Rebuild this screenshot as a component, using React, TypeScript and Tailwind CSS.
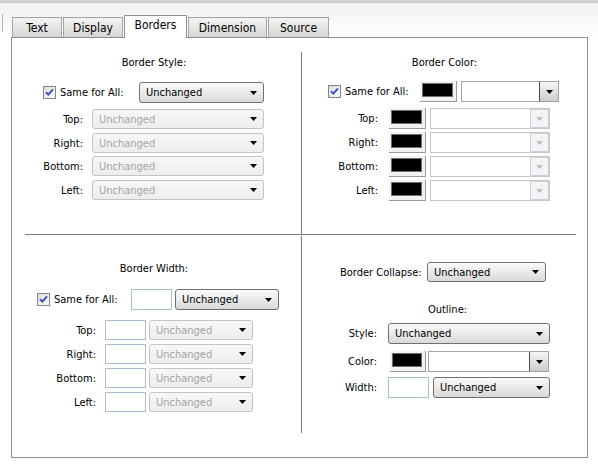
import type { ReactNode } from "react";

const Arrow = ({ color = "#000" }: { color?: string }) => (
  <svg width="7" height="4" viewBox="0 0 7 4" className="shrink-0">
    <path d="M0 0H7L3.5 4Z" fill={color} />
  </svg>
);

function Checkbox() {
  return (
    <svg width="13" height="13" viewBox="0 0 13 13" className="shrink-0">
      <defs>
        <linearGradient id="cbg" x1="0" y1="0" x2="1" y2="1">
          <stop offset="0" stopColor="#dcdcd6" />
          <stop offset="1" stopColor="#ffffff" />
        </linearGradient>
      </defs>
      <rect x="0.5" y="0.5" width="12" height="12" fill="url(#cbg)" stroke="#7a8799" />
      <path d="M3 6.2 L5.3 8.6 L10 3.4" fill="none" stroke="#3a4cc4" strokeWidth="1.9" />
    </svg>
  );
}

function Select({ w, h = 20, disabled = false }: { w: string; h?: number; disabled?: boolean }) {
  return (
    <div
      className={`${w} ${h === 21 ? "h-[21px]" : "h-[20px]"} flex items-center justify-between rounded-[3px] border pl-[6px] pr-[6px] ${
        disabled
          ? "border-[#c3c3c3] bg-gradient-to-b from-[#f7f7f7] to-[#ededed] text-[#a4a4a4]"
          : "border-[#707070] bg-gradient-to-b from-[#fbfbfb] to-[#d9d9d9] text-black"
      }`}
    >
      <span>Unchanged</span>
      <Arrow />
    </div>
  );
}

function Combo({ w, disabled = false }: { w: string; disabled?: boolean }) {
  return disabled ? (
    <div className={`${w} h-[21px] flex justify-end border border-[#c6c6c6] bg-white`}>
      <div className="w-[19px] h-full flex items-center justify-center border border-[#c4d1e2] bg-[#f3f3f3]">
        <Arrow color="#bdbdbd" />
      </div>
    </div>
  ) : (
    <div className={`${w} h-[21px] flex justify-end border border-[#a3a3a3] bg-white`}>
      <div className="w-[19px] h-full flex items-center justify-center border-l border-[#4a4a4a] bg-gradient-to-b from-[#f6f6f6] to-[#cdcdcd]">
        <Arrow />
      </div>
    </div>
  );
}

function ColorButton({ w = "w-[37px]" }: { w?: string }) {
  return (
    <div className={`${w} h-[21px] flex items-start border-r border-b border-[#9a9a9a] bg-[#f2f2f2] pl-[2px] pt-[2px] pr-[3px]`}>
      <div className="flex-1 h-[14px] bg-black border border-[#6e6e6e]" />
    </div>
  );
}

function Input({ h = 20 }: { h?: number }) {
  return <div className={`w-[41px] ${h === 21 ? "h-[21px]" : "h-[20px]"} border border-[#a9bdd6] bg-white`} />;
}

function Label({ w, children }: { w: string; children: ReactNode }) {
  return <div className={`${w} text-right shrink-0`}>{children}</div>;
}

const TABS = [
  { name: "Text", w: "w-[50px] mr-px" },
  { name: "Display", w: "w-[60px] mr-px" },
  { name: "Borders", w: "w-[63px] mr-px", active: true },
  { name: "Dimension", w: "w-[79px] mr-px" },
  { name: "Source", w: "w-[61px]" },
];

function Tabs() {
  return (
    <div className="flex items-end h-[22px] ml-[12px]">
      {TABS.map((t) =>
        t.active ? (
          <div
            key={t.name}
            className={`${t.w} relative z-10 -mb-px h-[23px] border border-b-0 border-[#919191] bg-white text-center pt-[3px] text-[12px]`}
          >
            {t.name}
          </div>
        ) : (
          <div
            key={t.name}
            className={`${t.w} h-[20px] border border-b-0 border-[#a5a5a5] bg-gradient-to-b from-[#f4f4f4] to-[#d6d6d6] text-center pt-[4px] text-[12px]`}
          >
            {t.name}
          </div>
        )
      )}
    </div>
  );
}

function BorderStyle() {
  const rows = ["Top:", "Right:", "Bottom:", "Left:"];
  const mts = ["mt-[6px]", "mt-[4px]", "mt-[3px]", "mt-[4px]"];
  return (
    <div className="w-[289px] shrink-0">
      <div className="mt-[18px] pr-[5px] text-center">Border Style:</div>
      <div className="mt-[13px] flex items-center h-[21px] pl-[31px]">
        <Checkbox />
        <div className="ml-[4px] w-[79px]">Same for All:</div>
        <Select w="w-[125px]" h={21} />
      </div>
      {rows.map((r, i) => (
        <div key={r} className={`${mts[i]} flex items-center h-[20px]`}>
          <Label w="w-[71px]">{r}</Label>
          <div className="ml-[9px]">
            <Select w="w-[172px]" disabled />
          </div>
        </div>
      ))}
    </div>
  );
}

function BorderColor() {
  const rows = ["Top:", "Right:", "Bottom:", "Left:"];
  return (
    <div className="flex-1">
      <div className="mt-[18px] text-center">Border Color:</div>
      <div className="mt-[12px] flex items-center h-[21px] pl-[26px]">
        <Checkbox />
        <div className="ml-[4px] w-[75px]">Same for All:</div>
        <ColorButton />
        <div className="ml-[4px]">
          <Combo w="w-[98px]" />
        </div>
      </div>
      <div className="mt-[6px] flex flex-col gap-[3px]">
        {rows.map((r) => (
          <div key={r} className="flex items-center h-[21px]">
            <Label w="w-[76px]">{r}</Label>
            <div className="ml-[11px] flex items-center">
              <ColorButton />
              <div className="ml-[4px]">
                <Combo w="w-[120px]" disabled />
              </div>
            </div>
          </div>
        ))}
      </div>
    </div>
  );
}

function BorderWidth() {
  const rows = ["Top:", "Right:", "Bottom:", "Left:"];
  return (
    <div className="w-[289px] shrink-0">
      <div className="mt-[27px] pr-[5px] text-center">Border Width:</div>
      <div className="mt-[14px] flex items-center h-[21px] pl-[25px]">
        <Checkbox />
        <div className="ml-[4px] w-[77px]">Same for All:</div>
        <Input h={21} />
        <div className="ml-[3px]">
          <Select w="w-[104px]" h={21} />
        </div>
      </div>
      <div className="mt-[10px] flex flex-col gap-[4px]">
        {rows.map((r) => (
          <div key={r} className="flex items-center h-[20px]">
            <Label w="w-[84px]">{r}</Label>
            <div className="ml-[9px] flex items-center">
              <Input />
              <div className="ml-[3px]">
                <Select w="w-[104px]" disabled />
              </div>
            </div>
          </div>
        ))}
      </div>
    </div>
  );
}

function Collapse() {
  return (
    <div className="flex-1">
      <div className="mt-[27px] flex items-center h-[20px] pl-[38px]">
        <div className="w-[87px]">Border Collapse:</div>
        <Select w="w-[119px]" />
      </div>
      <div className="mt-[21px] pl-[6px] text-center">Outline:</div>
      <div className="mt-[7px] flex items-center h-[21px]">
        <Label w="w-[75px]">Style:</Label>
        <div className="ml-[11px]">
          <Select w="w-[162px]" h={21} />
        </div>
      </div>
      <div className="mt-[7px] flex items-center h-[21px]">
        <Label w="w-[75px]">Color:</Label>
        <div className="ml-[13px] flex items-center">
          <ColorButton w="w-[36px]" />
          <div className="ml-[2px]">
            <Combo w="w-[121px]" />
          </div>
        </div>
      </div>
      <div className="mt-[5px] flex items-center h-[21px]">
        <Label w="w-[75px]">Width:</Label>
        <div className="ml-[11px] flex items-center">
          <Input h={21} />
          <div className="ml-[4px]">
            <Select w="w-[117px]" h={21} />
          </div>
        </div>
      </div>
    </div>
  );
}

export default function App() {
  return (
    <div className="relative w-[598px] h-[465px] overflow-hidden bg-white text-black text-[11px] leading-[13px] font-['DejaVu_Sans_Condensed','DejaVu_Sans',sans-serif] font-stretch-condensed">
      <div className="h-[2px] bg-[#d4d4d4]" />
      <div className="h-px bg-[#c8c8c8]" />
      <div className="bg-gradient-to-b from-[#f1f1f1] to-white pt-[12px]">
        <Tabs />
      </div>
      {/* edge of the neighbouring pane */}
      <div className="absolute left-[2px] top-[14px] w-px h-[18px] bg-[#b0b0b0]" />
      <div className="ml-[11px] w-[577px] h-[421px] border border-[#8f8f8f] bg-white">
        <div className="flex h-[196px]">
          <BorderStyle />
          <div className="w-px mt-[14px] bg-[#7d7d7d]" />
          <BorderColor />
        </div>
        <div className="ml-[13px] w-[551px] h-px bg-[#7d7d7d]" />
        <div className="flex h-[222px]">
          <BorderWidth />
          <div className="w-px mt-px h-[197px] bg-[#7d7d7d]" />
          <Collapse />
        </div>
      </div>
    </div>
  );
}
